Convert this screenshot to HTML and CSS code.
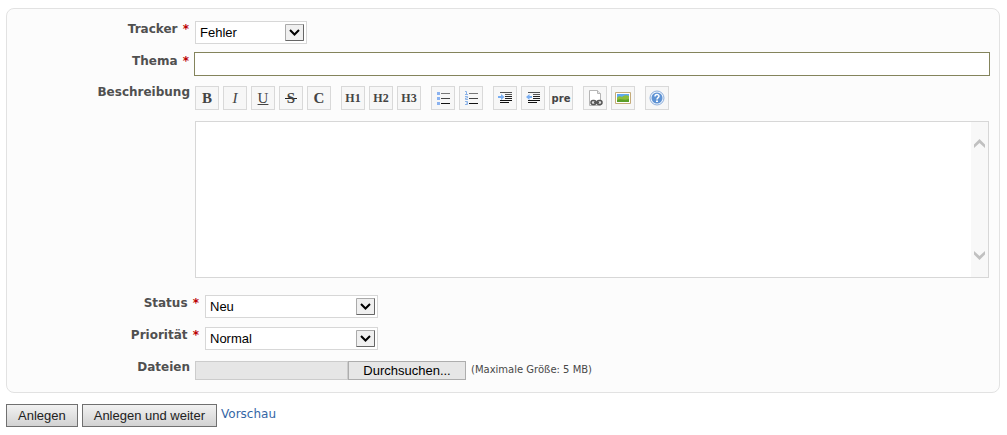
FILE: index.html
```html
<!DOCTYPE html>
<html lang="de">
<head>
  <meta charset="UTF-8">
  <title>Neues Ticket</title>
  <link rel="stylesheet" href="styles.css">
</head>
<body>

<form>
  <div class="box">

    <div class="row">
      <label class="name" for="tracker">Tracker <span class="required">*</span></label>
      <div class="select select-small">
        <select id="tracker"><option>Fehler</option></select>
        <svg class="arrow" width="19" height="17" viewBox="0 0 19 17"><path class="arrow-box" d="M.5.5h18v16H.5z"/><path class="arrow-edge" d="M.5 16.5h18V.5"/><path class="arrow-mark" d="M5 6l4.500 4.500L14 6"/></svg>
      </div>
    </div>

    <div class="row subject-row">
      <label class="name" for="subject">Thema <span class="required">*</span></label>
      <input type="text" id="subject" class="subject">
    </div>

    <div class="row toolbar-row">
      <label class="name name-tight" for="description">Beschreibung</label>
      <div class="toolbar">
        <div class="group">
          <button type="button" title="Fett"><b>B</b></button>
          <button type="button" title="Kursiv"><i>I</i></button>
          <button type="button" title="Unterstrichen"><u>U</u></button>
          <button type="button" title="Durchgestrichen"><s>S</s></button>
          <button type="button" title="Quelltext"><b>C</b></button>
        </div>
        <div class="group">
          <button type="button" class="heading">H1</button>
          <button type="button" class="heading">H2</button>
          <button type="button" class="heading">H3</button>
        </div>
        <div class="group">
          <button type="button" aria-label="Liste">
            <svg width="16" height="16" viewBox="0 0 16 16"><path fill="#8ab2f0" d="M2 2h3v3H2zM2 7h3v3H2zM2 12h3v3H2z"/><path stroke="#777" d="M6 3.500h9"/><path stroke="#444" d="M6 8.500h9"/><path stroke="#111" d="M6 13.500h9"/></svg>
          </button>
          <button type="button" aria-label="Nummerierte Liste">
            <svg width="16" height="16" viewBox="0 0 16 16"><path fill="none" stroke="#8ab2e8" d="M2 1.500h1.500V4M2 4.500h3M2 6.500h2.500v1.500H2.500v1.500H5M2 11.500h2.500v3H2M3 13h1.500"/><path stroke="#777" d="M6 3.500h9"/><path stroke="#444" d="M6 8.500h9"/><path stroke="#111" d="M6 13.500h9"/></svg>
          </button>
        </div>
        <div class="group">
          <button type="button" aria-label="Zitat">
            <svg width="16" height="16" viewBox="0 0 16 16"><path stroke="#555" stroke-width="1" d="M3 2.500h12M8 4.500h7"/><path stroke="#222" d="M8 6.500h7M8 8.500h7"/><path stroke="#111" d="M3 10.500h12M3 12.500h9"/><path fill="#79aef2" d="M1 6h3V4l3.500 3L4 10V8H1z"/></svg>
          </button>
          <button type="button" aria-label="Zitat entfernen">
            <svg width="16" height="16" viewBox="0 0 16 16"><path stroke="#555" stroke-width="1" d="M3 2.500h12M8 4.500h7"/><path stroke="#222" d="M8 6.500h7M8 8.500h7"/><path stroke="#111" d="M3 10.500h12M3 12.500h9"/><path fill="#79aef2" d="M7 6H4.500V4L1 7l3.500 3V8H7z"/></svg>
          </button>
          <button type="button" class="pre">pre</button>
        </div>
        <div class="group">
          <button type="button" aria-label="Link zu einer Wiki-Seite">
            <svg width="16" height="16" viewBox="0 0 16 16"><path fill="#fff" stroke="#b5b5b5" d="M2.500.5h8l3 3v12h-11z"/><path fill="#e5e5e5" stroke="#b5b5b5" d="M10.500.5v3h3"/><g fill="#ddd" stroke="#555" stroke-width="1.500"><rect x="4" y="10.500" width="5" height="4" rx="2"/><rect x="10" y="10.500" width="5" height="4" rx="2"/></g><path stroke="#555" stroke-width="2" d="M7 12.500h5"/></svg>
          </button>
          <button type="button" aria-label="Bild">
            <svg width="16" height="16" viewBox="0 0 16 16"><path fill="#fff" stroke="#c4aa78" d="M.5 2.500h15v11H.5z"/><path fill="#5faaf0" d="M2 4h12v8H2z"/><path fill="#8dbc3c" d="M2 8c1-2 3-2 5-1 2-2 5-2 7-1v6H2z"/><path fill="#5a9f28" d="M2 10c4-2 7 1 12-1v3H2z"/></svg>
          </button>
        </div>
        <div class="group">
          <button type="button" aria-label="Hilfe">
            <svg width="16" height="16" viewBox="0 0 16 16"><circle cx="8" cy="8" r="7" fill="#eef4fc" stroke="#8fb0dc"/><circle cx="8" cy="8" r="5.500" fill="#5f93d4"/><path fill="none" stroke="#fff" stroke-width="1.500" d="M6 6.500C6 4 10 4 10 6.300 10 7.700 8 7.700 8 9.500"/><path fill="#fff" d="M7 10.500h2V12H7z"/></svg>
          </button>
        </div>
      </div>
    </div>

    <div class="row editor-row">
      <div class="name"></div>
      <div class="editor">
        <textarea id="description"></textarea>
        <div class="scrollbar">
          <svg width="11" height="9" viewBox="0 0 11 9"><path d="M0 5.500L5.500 0 11 5.500V9L5.500 4 0 9z"/></svg>
          <svg width="11" height="9" viewBox="0 0 11 9"><path d="M0 3.500L5.500 9 11 3.500V0L5.500 5 0 0z"/></svg>
        </div>
      </div>
    </div>

    <div class="row attribute">
      <label class="name" for="status">Status <span class="required">*</span></label>
      <div class="select">
        <select id="status"><option>Neu</option></select>
        <svg class="arrow" width="19" height="17" viewBox="0 0 19 17"><path class="arrow-box" d="M.5.5h18v16H.5z"/><path class="arrow-edge" d="M.5 16.5h18V.5"/><path class="arrow-mark" d="M5 6l4.500 4.500L14 6"/></svg>
      </div>
    </div>

    <div class="row attribute priority-row">
      <label class="name" for="priority">Priorität <span class="required">*</span></label>
      <div class="select">
        <select id="priority"><option>Normal</option></select>
        <svg class="arrow" width="19" height="17" viewBox="0 0 19 17"><path class="arrow-box" d="M.5.5h18v16H.5z"/><path class="arrow-edge" d="M.5 16.5h18V.5"/><path class="arrow-mark" d="M5 6l4.500 4.500L14 6"/></svg>
      </div>
    </div>

    <div class="row files-row">
      <label class="name name-tight" for="files">Dateien</label>
      <div class="file">
        <span class="file-path"></span>
        <span class="file-button">Durchsuchen...</span>
        <input type="file" id="files">
      </div>
      <span class="hint">(Maximale Größe: 5 MB)</span>
    </div>

  </div>

  <div class="actions">
    <button type="submit">Anlegen</button>
    <button type="submit">Anlegen und weiter</button>
    <a href="#">Vorschau</a>
  </div>
</form>

</body>
</html>
```

FILE: styles.css
```css
body {
  margin: 8px 7px 8px 6px;
  background-color: white;
  color: #484848;
  font-family: Verdana, "DejaVu Sans", sans-serif;
  font-size: 12px;
}

* {
  box-sizing: border-box;
}

.box {
  padding: 12px 10px;
  background-color: #fcfcfc;
  border: 1px solid #e2e2e2;
  border-radius: 8px;
}

.row {
  display: flex;
  align-items: flex-start;
  gap: 5px;
}

.name {
  width: 173px;
  flex-shrink: 0;
  color: #505050;
  font-weight: bold;
  line-height: 16px;
  text-align: right;
}

.name-tight {
  line-height: 12px;
}

.attribute .name {
  width: 183px;
}

.required {
  margin: 0 1px;
  color: #bb0000;
}

/* drop-downs */
.select {
  display: grid;
  align-items: center;
  width: 173px;
}

.select-small {
  width: 112px;
}

.select select,
.select .arrow {
  grid-area: 1 / 1;
}

.select select {
  width: 100%;
  height: 23px;
  padding: 0 4px;
  appearance: none;
  background-color: white;
  border: 1px solid #d7d7d7;
  border-radius: 0;
  color: black;
  font-family: Arial, "Liberation Sans", sans-serif;
  font-size: 13px;
}

.arrow {
  justify-self: end;
  margin-right: 3px;
  pointer-events: none;
}

.arrow-box {
  fill: #f0f0f0;
  stroke: #aaa;
}

.arrow-edge {
  fill: none;
  stroke: #666;
}

.arrow-mark {
  fill: none;
  stroke: black;
  stroke-width: 2;
}

.subject-row {
  margin-top: 9px;
}

.subject {
  flex: 1;
  height: 22px;
  padding: 0 4px;
  background-color: white;
  border: none;
  outline: 1px solid #84845c;
}

/* text formatting toolbar */
.toolbar-row {
  margin-top: 11px;
}

.toolbar,
.group {
  display: flex;
}

.toolbar {
  gap: 10px;
}

.group {
  gap: 4px;
}

.toolbar button {
  display: flex;
  align-items: center;
  justify-content: center;
  width: 24px;
  height: 24px;
  padding: 0;
  background-color: #f7f7f7;
  border: 1px solid #d9d9d9;
  color: #444;
  font-family: "Times New Roman", "Liberation Serif", serif;
  font-size: 15px;
}

/* the strike line runs past the letter on both sides */
.toolbar s {
  padding: 0 2px;
  background: linear-gradient(#222, #222) center / 100% 1px no-repeat;
  font-weight: bold;
  text-decoration: none;
}

.toolbar .heading {
  font-size: 12px;
  font-weight: bold;
}

.toolbar .pre {
  font-family: Verdana, "DejaVu Sans", sans-serif;
  font-size: 10px;
  font-weight: bold;
}

/* description */
.editor-row {
  margin-top: 11px;
}

.editor {
  display: flex;
  flex: 1;
  height: 157px;
  background-color: white;
  border: 1px solid #d7d7d7;
}

.editor textarea {
  flex: 1;
  padding: 4px;
  border: none;
  outline: none;
  resize: none;
}

.scrollbar {
  display: flex;
  flex-direction: column;
  align-items: center;
  justify-content: space-between;
  width: 17px;
  padding: 17px 0;
  background-color: #f8f8f8;
  fill: #c0c0c0;
}

.attribute {
  margin-top: 17px;
}

.priority-row {
  margin-top: 9px;
}

/* file upload */
.files-row {
  margin-top: 11px;
}

.file {
  position: relative;
  display: flex;
  height: 19px;
}

.file-path {
  width: 153px;
  background-color: #e6e6e6;
  border: 1px solid #ccc;
}

.file-button {
  width: 118px;
  background-color: #e6e6e6;
  border: 1px solid #adadad;
  color: black;
  font-family: Arial, "Liberation Sans", sans-serif;
  font-size: 13px;
  line-height: 17px;
  text-align: center;
}

.file input {
  position: absolute;
  inset: 0;
  width: 100%;
  opacity: 0;
}

.hint {
  font-size: 10px;
  line-height: 17px;
}

/* form buttons */
.actions {
  display: flex;
  gap: 4px;
  margin-top: 11px;
}

.actions button {
  height: 23px;
  padding: 0 11px;
  background: linear-gradient(#f2f2f2, #d2d2d2);
  border: 1px solid #707070;
  color: #222;
  font-family: Arial, "Liberation Sans", sans-serif;
  font-size: 13px;
}

.actions a {
  color: #3566a5;
  line-height: 20px;
  text-decoration: none;
}
```
